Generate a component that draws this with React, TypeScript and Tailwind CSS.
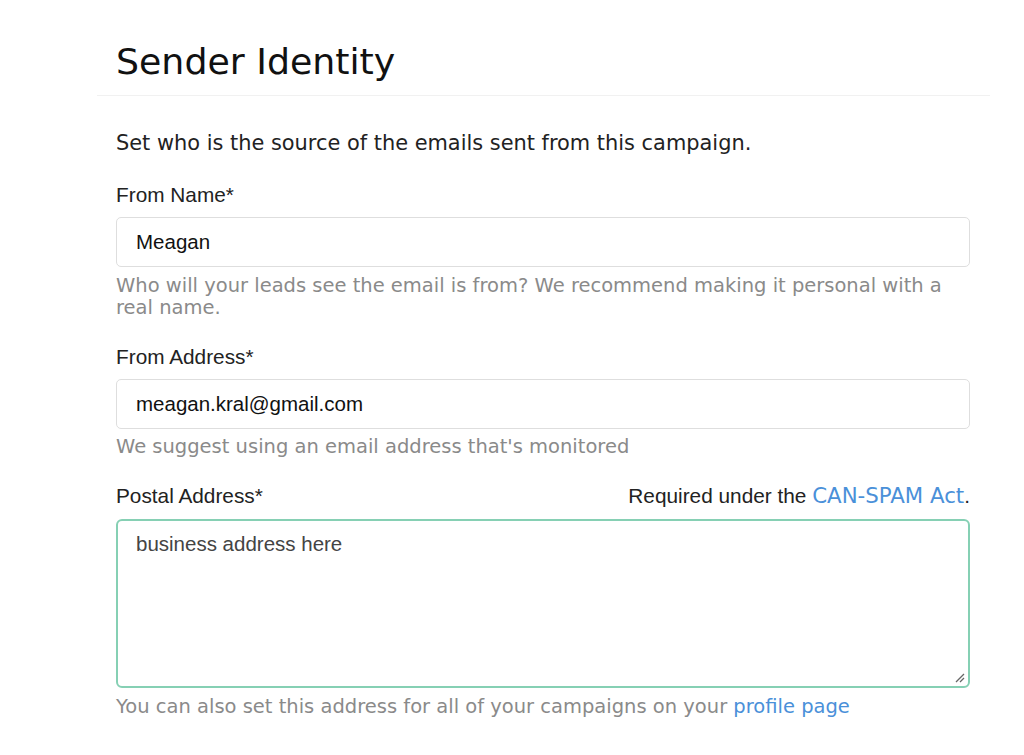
const verdana = "font-['DejaVu_Sans',sans-serif]";
const helv = "font-['Liberation_Sans',Arial,sans-serif]";

function Label({ children }: { children: React.ReactNode }) {
  return <label className={`block text-[20.8px] leading-[24px] text-[#222] ${helv}`}>{children}</label>;
}

function Help({ children, top = 8 }: { children: React.ReactNode; top?: number }) {
  return (
    <p className={`${top === 8 ? "mt-[8px]" : "mt-[7px]"} text-[19.5px] leading-[22px] text-[#8a8a8a] ${verdana}`}>
      {children}
    </p>
  );
}

export default function App() {
  return (
    <div className="min-h-screen bg-white">
      <div className="ml-[97px] w-[893px]">
        <div className="border-b border-[#f1f1f1] pl-[19px] pt-[40px] pb-[11px]">
          <h1 className={`text-[36.3px] leading-[44px] text-[#111] ${verdana}`}>Sender Identity</h1>
        </div>

        <div className="pl-[19px] pr-[20px]">
          <p className={`mt-[35px] text-[20.9px] leading-[24px] text-[#222] ${verdana}`}>
            Set who is the source of the emails sent from this campaign.
          </p>

          <div className="mt-[28px]">
            <Label>From Name*</Label>
            <div className={`mt-[10px] flex h-[50px] items-center rounded-[5px] border border-[#dedede] px-[19px] text-[20.5px] text-[#111] ${helv}`}>
              Meagan
            </div>
            <Help>Who will your leads see the email is from? We recommend making it personal with a real name.</Help>
          </div>

          <div className="mt-[26px]">
            <Label>From Address*</Label>
            <div className={`mt-[10px] flex h-[50px] items-center rounded-[5px] border border-[#dedede] px-[19px] text-[20.5px] text-[#111] ${helv}`}>
              meagan.kral@gmail.com
            </div>
            <Help top={7}>We suggest using an email address that's monitored</Help>
          </div>

          <div className="mt-[26px]">
            <div className="flex items-baseline justify-between">
              <Label>Postal Address*</Label>
              <span className={`text-[20.8px] leading-[24px] text-[#222] ${helv}`}>
                Required under the{" "}
                <a className={`text-[#4a90d9] ${verdana} text-[21.3px]`}>CAN-SPAM Act</a>.
              </span>
            </div>
            <div className="relative mt-[11px] h-[169px] rounded-[6px] border-2 border-[#86d0b4] px-[18px] pt-[11px]">
              <span className={`block text-[20.5px] leading-[24px] text-[#444] ${helv}`}>business address here</span>
              <svg className="absolute bottom-[3px] right-[3px]" width="12" height="12" viewBox="0 0 12 12">
                <path d="M11 3 L3 11 M11 7 L7 11" stroke="#666" strokeWidth="1.3" />
              </svg>
            </div>
            <Help>
              You can also set this address for all of your campaigns on your{" "}
              <a className="text-[#4a90d9]">profile page</a>
            </Help>
          </div>
        </div>
      </div>
    </div>
  );
}
